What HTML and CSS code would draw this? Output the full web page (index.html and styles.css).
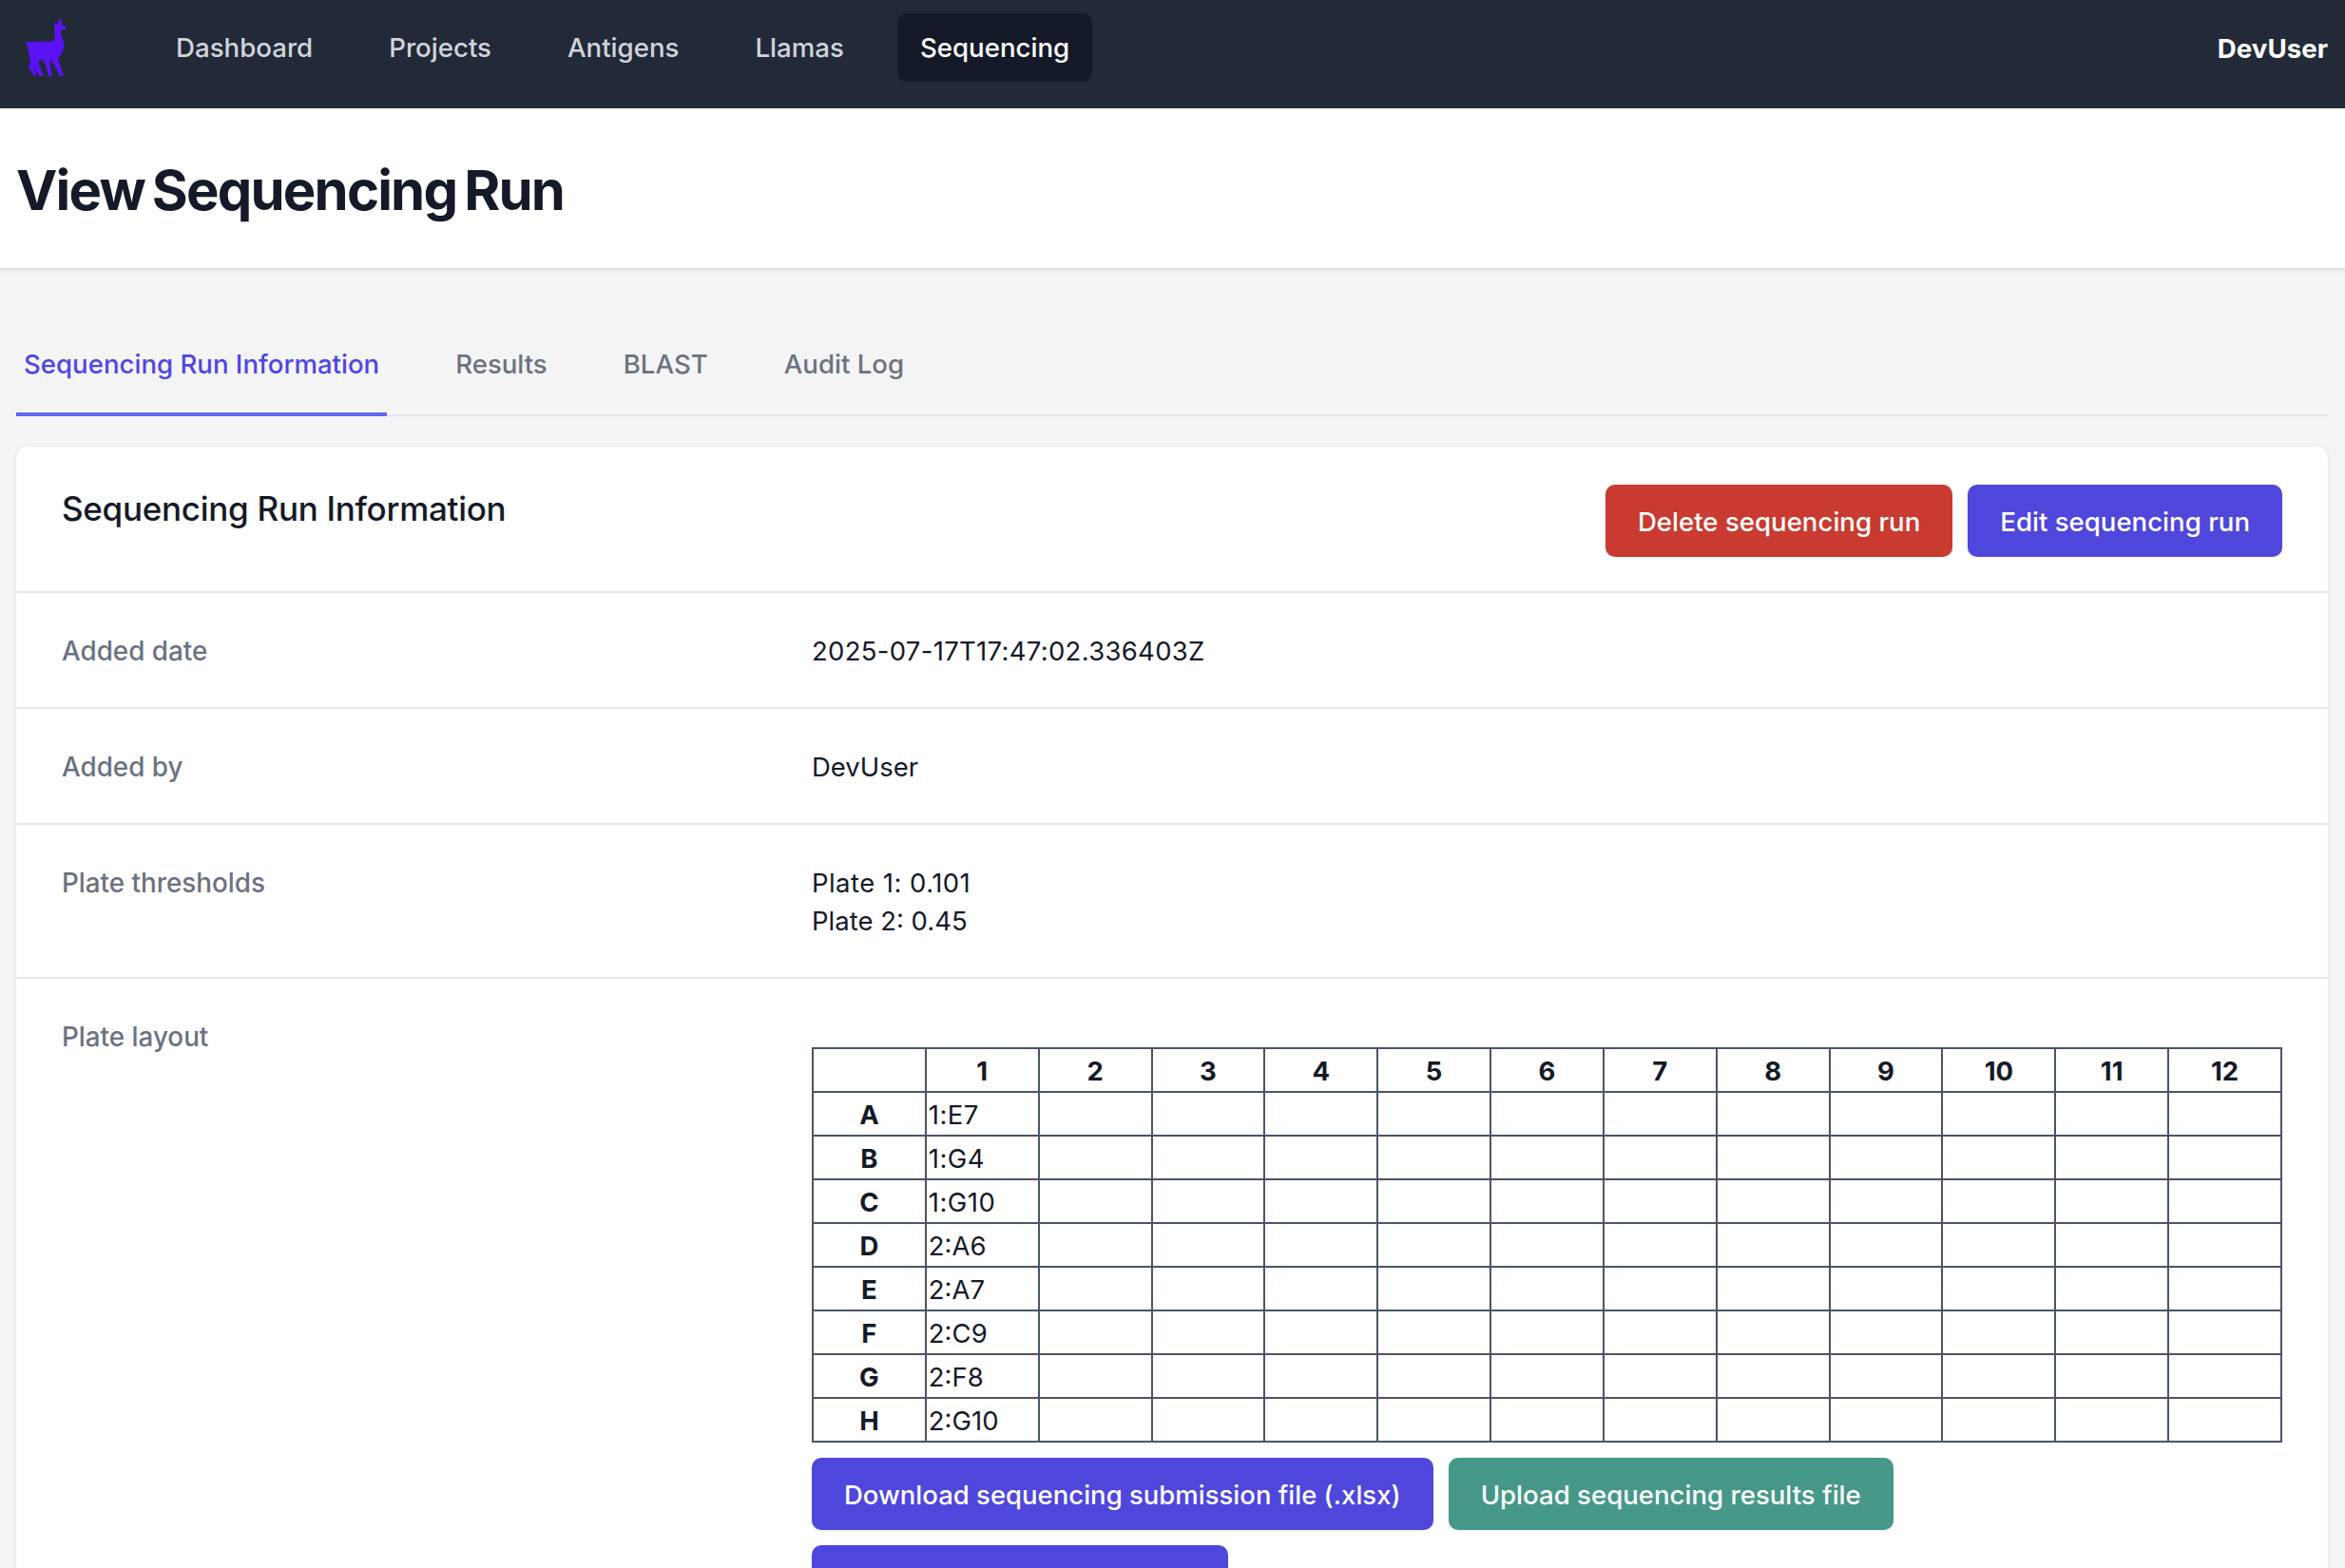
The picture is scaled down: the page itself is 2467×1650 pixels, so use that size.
FILE: index.html
```html
<!DOCTYPE html>
<html lang="en">
<head>
    <meta charset="UTF-8">
    <title>View Sequencing Run</title>
    <link rel="stylesheet" href="styles.css">
</head>
<body>
    <nav class="navbar">
        <svg class="logo" viewBox="0 0 120 110" width="120" height="110">
            <path d="M29 44 L56 43.5 L57.5 40 L57 27 L58 23 L60 26 L62 21 L64 19 L65 26 L69 28 L70 30 L68 31 L64 31 L64 36 L67 44 L67 50 L65 56 L61 62 L67 80 L63 80 L55 65 L52 63 L55 80 L51 80 L48 68 L44 62 L40 66 L46 80 L41 80 L36 71 L38 80 L36 80 L30 71 L32 66 L30 54 L28 46 Z" fill="#5b12f5"/>
        </svg>
        <div class="nav-links">
            <a class="nav-link">Dashboard</a>
            <a class="nav-link">Projects</a>
            <a class="nav-link">Antigens</a>
            <a class="nav-link">Llamas</a>
            <a class="nav-link active">Sequencing</a>
        </div>
        <div class="nav-user">DevUser</div>
    </nav>

    <header class="page-header">
        <h1>View Sequencing Run</h1>
    </header>

    <main class="content">
        <div class="tabs">
            <a class="tab active">Sequencing Run Information</a>
            <a class="tab">Results</a>
            <a class="tab">BLAST</a>
            <a class="tab">Audit Log</a>
        </div>

        <section class="card">
            <div class="card-head">
                <h2>Sequencing Run Information</h2>
                <div class="actions">
                    <button class="btn btn-red">Delete sequencing run</button>
                    <button class="btn btn-indigo">Edit sequencing run</button>
                </div>
            </div>
            <div class="row">
                <div class="row-label">Added date</div>
                <div class="row-value date-value">2025-07-17T17:47:02.336403Z</div>
            </div>
            <div class="row">
                <div class="row-label">Added by</div>
                <div class="row-value">DevUser</div>
            </div>
            <div class="row">
                <div class="row-label">Plate thresholds</div>
                <div class="row-value"><span class="ones">Plate 1: 0.101</span><br>Plate 2: 0.45</div>
            </div>
            <div class="row">
                <div class="row-label">Plate layout</div>
                <div class="row-value">
                    <table class="plate">
                        <thead>
                            <tr><th></th><th>1</th><th>2</th><th>3</th><th>4</th><th>5</th><th>6</th><th>7</th><th>8</th><th>9</th><th>10</th><th>11</th><th>12</th></tr>
                        </thead>
                        <tbody>
                            <tr><th>A</th><td class="ones">1:E7</td><td></td><td></td><td></td><td></td><td></td><td></td><td></td><td></td><td></td><td></td><td></td></tr>
                            <tr><th>B</th><td class="ones">1:G4</td><td></td><td></td><td></td><td></td><td></td><td></td><td></td><td></td><td></td><td></td><td></td></tr>
                            <tr><th>C</th><td class="ones">1:G10</td><td></td><td></td><td></td><td></td><td></td><td></td><td></td><td></td><td></td><td></td><td></td></tr>
                            <tr><th>D</th><td>2:A6</td><td></td><td></td><td></td><td></td><td></td><td></td><td></td><td></td><td></td><td></td><td></td></tr>
                            <tr><th>E</th><td>2:A7</td><td></td><td></td><td></td><td></td><td></td><td></td><td></td><td></td><td></td><td></td><td></td></tr>
                            <tr><th>F</th><td>2:C9</td><td></td><td></td><td></td><td></td><td></td><td></td><td></td><td></td><td></td><td></td><td></td></tr>
                            <tr><th>G</th><td>2:F8</td><td></td><td></td><td></td><td></td><td></td><td></td><td></td><td></td><td></td><td></td><td></td></tr>
                            <tr><th>H</th><td>2:G10</td><td></td><td></td><td></td><td></td><td></td><td></td><td></td><td></td><td></td><td></td><td></td></tr>
                        </tbody>
                    </table>
                    <div class="plate-actions">
                        <button class="btn btn-indigo">Download sequencing submission file (.xlsx)</button>
                        <button class="btn btn-teal">Upload sequencing results file</button>
                        <button class="btn btn-indigo btn-cut"></button>
                    </div>
                </div>
            </div>
        </section>
    </main>
</body>
</html>
```

FILE: styles.css
```css
html, body {
    height: 1650px;
    overflow: hidden;
}

body {
    margin: 0;
    background: #f3f4f6;
    color: #141a28;
    font-family: Inter, "Liberation Sans", sans-serif;
    font-size: 28px;
}

.navbar {
    display: flex;
    align-items: flex-start;
    height: 114px;
    background: #222a38;
}

.logo {
    flex: none;
}

.nav-links {
    display: flex;
    gap: 32px;
    margin-left: 41px;
    padding-top: 14px;
}

.nav-link {
    padding: 12px 24px;
    border-radius: 10px;
    color: #d1d5db;
    font-size: 27.65px;
    font-weight: 500;
    line-height: 48px;
    height: 48px;
}

.nav-link.active {
    background: #141a28;
    color: #fff;
}

.nav-user {
    margin-left: auto;
    padding: 33px 18px 0 0;
    color: #fff;
    font-size: 27.7px;
    font-weight: 700;
    line-height: 36px;
}

.page-header {
    height: 168px;
    box-sizing: border-box;
    padding: 3px 17px 0;
    display: flex;
    align-items: center;
    background: #fff;
    box-shadow: 0 2px 4px rgba(0, 0, 0, 0.12);
}

h1 {
    margin: 0;
    font-size: 58px;
    font-weight: 700;
    letter-spacing: -1.8px;
    word-spacing: -4px;
}

.content {
    padding: 0 18px 0 17px;
}

.tabs {
    display: flex;
    gap: 64px;
    margin-top: 55px;
    height: 99px;
    border-bottom: 2px solid #e5e7eb;
}

.tab {
    padding: 0 8px;
    height: 99px;
    line-height: 92px;
    color: #6b7280;
    font-size: 27.6px;
    font-weight: 500;
    box-sizing: border-box;
}

.tab.active {
    color: #4f46e5;
    border-bottom: 4px solid #6366f1;
    height: 101px;
}

.card {
    margin-top: 32px;
    background: #fff;
    border-radius: 13px;
    box-shadow: 0 1px 4px rgba(0, 0, 0, 0.1);
}

.card-head {
    display: flex;
    justify-content: space-between;
    align-items: flex-start;
    height: 152px;
    box-sizing: border-box;
    padding: 40px 48px 0;
}

h2 {
    margin: 0;
    font-size: 35px;
    font-weight: 500;
    letter-spacing: -0.28px;
    line-height: 51px;
}

.actions {
    display: flex;
    gap: 16px;
}

.btn {
    height: 76px;
    padding: 1px 34px 0;
    border: none;
    border-radius: 10px;
    color: #fff;
    font-family: inherit;
    font-size: 27.5px;
    font-weight: 500;
    box-shadow: 0 1px 3px rgba(0, 0, 0, 0.08);
}

.actions .btn,
.btn-teal {
    font-size: 27.6px;
}

.btn-red {
    background: #c93a30;
}

.btn-indigo {
    background: #4f46dc;
}

.btn-teal {
    background: #459888;
}

.btn-cut {
    width: 438px;
}

.row {
    display: grid;
    grid-template-columns: 789px 1fr;
    padding: 41px 48px 39px;
    border-top: 2px solid #e5e7eb;
    line-height: 40px;
}

.row-label {
    color: #6b7280;
    font-size: 27.8px;
    font-weight: 500;
}

.row-value {
    font-size: 27.5px;
}

/* the reference font sets the digit 1 wider */
.date-value {
    letter-spacing: 0.3px;
}

.ones {
    letter-spacing: 0.45px;
}

.plate {
    width: 100%;
    margin-top: 31px;
    border-collapse: collapse;
    table-layout: fixed;
    font-size: 27.5px;
}

.plate th,
.plate td {
    height: 46px;
    padding: 2px 2px 0;
    border: 2px solid #4a5568;
    line-height: 42px;
    box-sizing: border-box;
}

.plate td {
    text-align: left;
}

.plate-actions {
    display: flex;
    flex-wrap: wrap;
    gap: 16px;
    margin-top: 16px;
}
```
